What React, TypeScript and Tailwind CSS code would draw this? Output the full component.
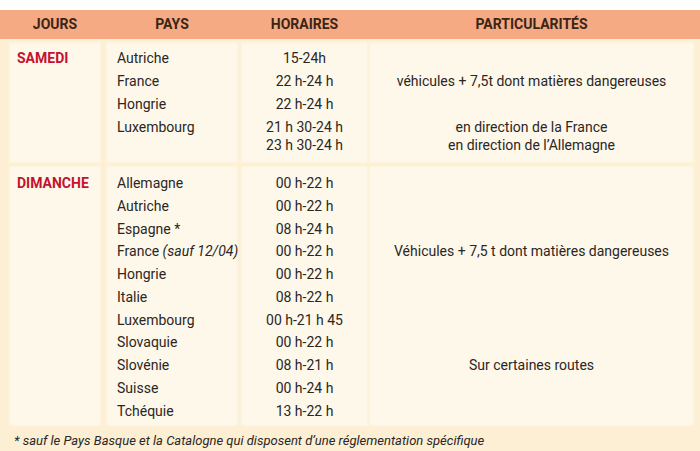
const font = { fontFamily: '"Liberation Sans Narrow", Roboto, "Liberation Sans", sans-serif' };

type Row = { pays: React.ReactNode; horaires: string[]; note?: string[] };

const samedi: Row[] = [
  { pays: 'Autriche', horaires: ['15-24h'] },
  { pays: 'France', horaires: ['22 h-24 h'], note: ['véhicules + 7,5t dont matières dangereuses'] },
  { pays: 'Hongrie', horaires: ['22 h-24 h'] },
  {
    pays: 'Luxembourg',
    horaires: ['21 h 30-24 h', '23 h 30-24 h'],
    note: ['en direction de la France', 'en direction de l’Allemagne'],
  },
];

const dimanche: Row[] = [
  { pays: 'Allemagne', horaires: ['00 h-22 h'] },
  { pays: 'Autriche', horaires: ['00 h-22 h'] },
  { pays: 'Espagne *', horaires: ['08 h-24 h'] },
  {
    pays: (
      <span>
        France <i>(sauf 12/04)</i>
      </span>
    ),
    horaires: ['00 h-22 h'],
    note: ['Véhicules + 7,5 t dont matières dangereuses'],
  },
  { pays: 'Hongrie', horaires: ['00 h-22 h'] },
  { pays: 'Italie', horaires: ['08 h-22 h'] },
  { pays: 'Luxembourg', horaires: ['00 h-21 h 45'] },
  { pays: 'Slovaquie', horaires: ['00 h-22 h'] },
  { pays: 'Slovénie', horaires: ['08 h-21 h'], note: ['Sur certaines routes'] },
  { pays: 'Suisse', horaires: ['00 h-24 h'] },
  { pays: 'Tchéquie', horaires: ['13 h-22 h'] },
];

// column widths include the gutter to the left of each cell (7, 5, 3 px)
const cols = 'grid grid-cols-[90px_137px_130px_326px] pl-[10px]';
const cell = 'bg-[#fef8ea] shadow-[0_0_3px_1px_#fef4e0]';

function Section({ day, rows, rowH, pt, pb }: { day: string; rows: Row[]; rowH: string; pt: string; pb: string }) {
  const multi = (lines: string[]) =>
    lines.length > 1 ? (
      <div className="pt-[2px] leading-[18px]">
        {lines.map((l) => (
          <div key={l}>{l}</div>
        ))}
      </div>
    ) : (
      lines[0]
    );

  return (
    <div className={cols}>
      <div className={`${cell} ${pt} pl-[7px] font-bold text-[#c3122e]`}>
        <div className={`${rowH} flex items-center`}>{day}</div>
      </div>
      <div className={`${cell} ml-[7px] ${pt} ${pb} pl-[10px] text-[#2b2624] whitespace-nowrap`}>
        {rows.map((r, i) => (
          <div key={i} className={`${r.horaires.length > 1 ? 'pt-[2px] leading-[18px]' : `${rowH} flex items-center`}`}>
            {r.pays}
          </div>
        ))}
      </div>
      <div className={`${cell} ml-[5px] ${pt} ${pb} text-center text-[#2b2624]`}>
        {rows.map((r, i) => (
          <div key={i} className={r.horaires.length > 1 ? '' : `${rowH} flex items-center justify-center`}>
            {multi(r.horaires)}
          </div>
        ))}
      </div>
      <div className={`${cell} ml-[3px] ${pt} ${pb} text-center text-[#2b2624]`}>
        {rows.map((r, i) => (
          <div key={i} className={r.horaires.length > 1 ? '' : `${rowH} flex items-center justify-center`}>
            {r.note ? multi(r.note) : ''}
          </div>
        ))}
      </div>
    </div>
  );
}

export default function App() {
  return (
    <div className="w-[700px] h-[451px] bg-white pt-[10px] text-[14px] leading-[23px]" style={font}>
      <div className={`${cols} h-[29px] items-center bg-[#f5aa84] font-bold text-[#3a2517] text-center`}>
        <div>JOURS</div>
        <div className="ml-[7px]">PAYS</div>
        <div className="ml-[5px]">HORAIRES</div>
        <div className="ml-[3px]">PARTICULARITÉS</div>
      </div>
      <div className="bg-[#fcefd4] pt-[4px] pr-[7px] flex flex-col gap-[5px]">
        <Section day="SAMEDI" rows={samedi} rowH="h-[23px]" pt="pt-[4px]" pb="pb-[8px]" />
        <Section day="DIMANCHE" rows={dimanche} rowH="h-[22.8px]" pt="pt-[5px]" pb="pb-[2px]" />
        <div className="h-[22px] pl-[14px] text-[13px] italic text-[#2b2624] flex items-center">
          * sauf le Pays Basque et la Catalogne qui disposent d’une réglementation spécifique
        </div>
      </div>
    </div>
  );
}
